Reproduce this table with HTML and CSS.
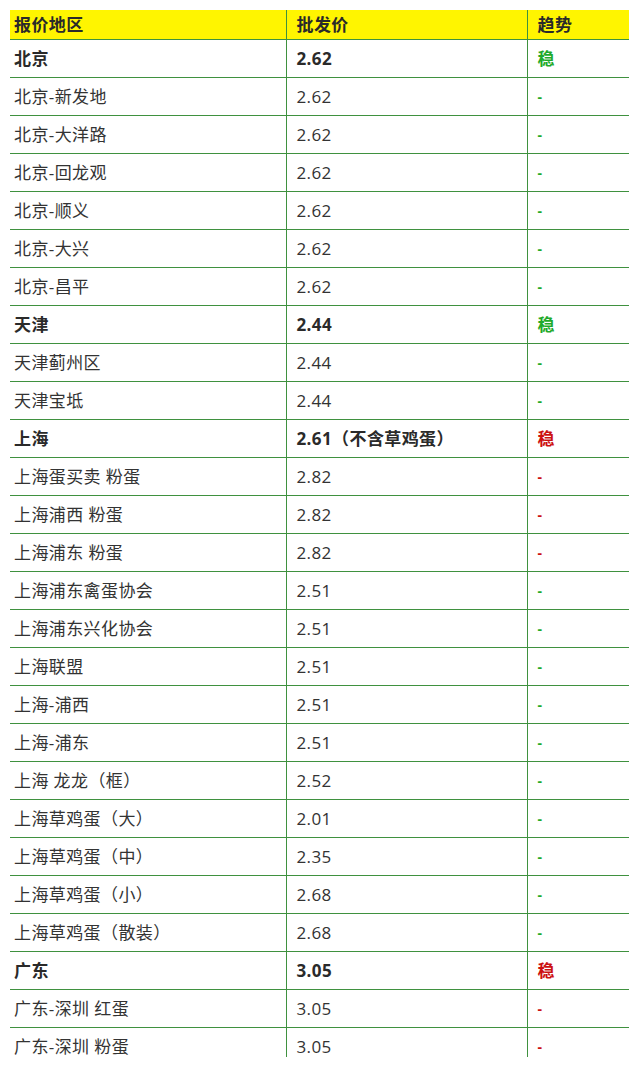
FILE: index.html
```html
<!DOCTYPE html>
<html lang="zh-CN">
<head>
<meta charset="utf-8">
<title>鸡蛋批发价</title>
<link rel="stylesheet" href="styles.css">
</head>
<body>
<div class="clip">
<table class="price">
<colgroup><col class="c1"><col class="c2"><col class="c3"></colgroup>
<thead>
<tr><th class="first">报价地区</th><th>批发价</th><th>趋势</th></tr>
</thead>
<tbody>
<tr class="main"><td class="first">北京</td><td>2.62</td><td class="up">稳</td></tr>
<tr><td class="first">北京-新发地</td><td>2.62</td><td class="up dash">-</td></tr>
<tr><td class="first">北京-大洋路</td><td>2.62</td><td class="up dash">-</td></tr>
<tr><td class="first">北京-回龙观</td><td>2.62</td><td class="up dash">-</td></tr>
<tr><td class="first">北京-顺义</td><td>2.62</td><td class="up dash">-</td></tr>
<tr><td class="first">北京-大兴</td><td>2.62</td><td class="up dash">-</td></tr>
<tr><td class="first">北京-昌平</td><td>2.62</td><td class="up dash">-</td></tr>
<tr class="main"><td class="first">天津</td><td>2.44</td><td class="up">稳</td></tr>
<tr><td class="first">天津蓟州区</td><td>2.44</td><td class="up dash">-</td></tr>
<tr><td class="first">天津宝坻</td><td>2.44</td><td class="up dash">-</td></tr>
<tr class="main"><td class="first">上海</td><td>2.61（不含草鸡蛋）</td><td class="down">稳</td></tr>
<tr><td class="first">上海蛋买卖 粉蛋</td><td>2.82</td><td class="down dash">-</td></tr>
<tr><td class="first">上海浦西 粉蛋</td><td>2.82</td><td class="down dash">-</td></tr>
<tr><td class="first">上海浦东 粉蛋</td><td>2.82</td><td class="down dash">-</td></tr>
<tr><td class="first">上海浦东禽蛋协会</td><td>2.51</td><td class="up dash">-</td></tr>
<tr><td class="first">上海浦东兴化协会</td><td>2.51</td><td class="up dash">-</td></tr>
<tr><td class="first">上海联盟</td><td>2.51</td><td class="up dash">-</td></tr>
<tr><td class="first">上海-浦西</td><td>2.51</td><td class="up dash">-</td></tr>
<tr><td class="first">上海-浦东</td><td>2.51</td><td class="up dash">-</td></tr>
<tr><td class="first">上海 龙龙（框）</td><td>2.52</td><td class="up dash">-</td></tr>
<tr><td class="first">上海草鸡蛋（大）</td><td>2.01</td><td class="up dash">-</td></tr>
<tr><td class="first">上海草鸡蛋（中）</td><td>2.35</td><td class="up dash">-</td></tr>
<tr><td class="first">上海草鸡蛋（小）</td><td>2.68</td><td class="up dash">-</td></tr>
<tr><td class="first">上海草鸡蛋（散装）</td><td>2.68</td><td class="up dash">-</td></tr>
<tr class="main"><td class="first">广东</td><td>3.05</td><td class="down">稳</td></tr>
<tr><td class="first">广东-深圳 红蛋</td><td>3.05</td><td class="down dash">-</td></tr>
<tr><td class="first">广东-深圳 粉蛋</td><td>3.05</td><td class="down dash">-</td></tr>
</tbody>
</table>
</div>
</body>
</html>
```
FILE: styles.css
```css
html, body {
  margin: 0;
  padding: 0;
  background: #ffffff;
}
body {
  font-family: "Open Sans", "Noto Sans CJK SC", sans-serif;
  font-size: 17px;
  letter-spacing: 0.4px;
  color: #333333;
}
.clip {
  margin: 10px 10px 0 10px;
  width: 619px;
  height: 1047px;
  overflow: hidden;
}
.price {
  width: 619px;
  border-collapse: collapse;
  table-layout: fixed;
}
.c1 { width: 276px; }
.c2 { width: 241px; }
.c3 { width: 102px; }
.price th, .price td {
  text-align: left;
  vertical-align: middle;
  padding: 1px 10px 0 10px;
  border-left: 1px solid #3f913f;
  border-bottom: 1px solid #3f913f;
  white-space: nowrap;
  line-height: 20px;
}
.price th.first, .price td.first {
  border-left: none;
  padding-left: 4px;
}
.price th {
  background: #fff500;
  height: 28px;
  font-weight: bold;
  color: #2a2a2a;
}
.price td {
  height: 36px;
}
.price tr.main td {
  font-weight: bold;
  color: #2a2a2a;
}
.price tr.main td.up, .price td.up {
  color: #1faa2a;
  font-weight: bold;
}
.price tr.main td.down, .price td.down {
  color: #cc1111;
  font-weight: bold;
}
.price td.dash {
  font-size: 14px;
}
```
